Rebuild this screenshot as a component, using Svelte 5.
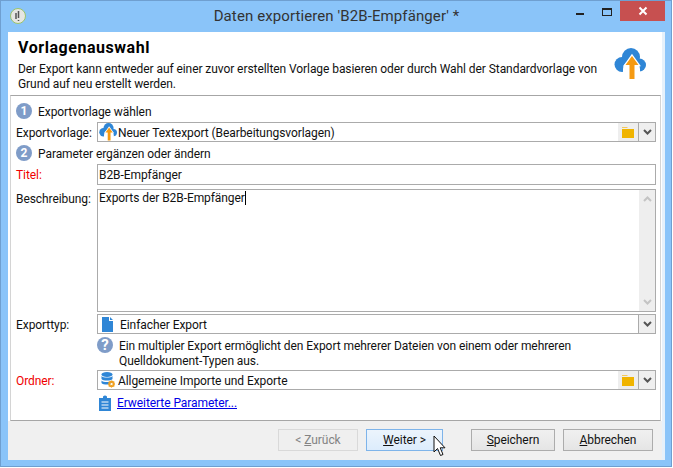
<script lang="ts">
    const buttons = [
        { pre: '< ', key: 'Z', rest: 'urück', kind: 'disabled', width: 80 },
        { pre: '', key: 'W', rest: 'eiter >', kind: 'hover', width: 77 },
        { pre: '', key: 'S', rest: 'peichern', kind: 'gap', width: 84 },
        { pre: '', key: 'A', rest: 'bbrechen', kind: '', width: 90 },
    ];
</script>

{#snippet cloud(size: number)}
    <svg width={size} height={size} viewBox="0 0 32 32">
        <circle cx="8" cy="16.5" r="7.5" fill="#2f86d6" />
        <circle cx="17" cy="9" r="9" fill="#2f86d6" />
        <circle cx="25.5" cy="17" r="6.5" fill="#2f86d6" />
        <circle cx="17.5" cy="21" r="8.5" fill="#fff" />
        <rect x="9" y="21" width="17" height="11" fill="#fff" />
        <path d="M18 8 L24.5 17 H20.5 V31 H15.5 V17 H11.5 Z" fill="#f59a12" stroke="#fff" stroke-width="2.5" paint-order="stroke" />
    </svg>
{/snippet}

{#snippet folder()}
    <span class="side-btn">
        <svg width="12" height="11" viewBox="0 0 12 11">
            <path d="M0 0 H5 L6 1 H0 Z" fill="#f5c95a" />
            <rect x="0" y="2" width="12" height="9" fill="#f0b400" />
        </svg>
    </span>
{/snippet}

{#snippet chevron(color: string)}
    <svg width="9" height="7" viewBox="0 0 9 7">
        <path d="M1 1 L4.5 4.5 L8 1" fill="none" stroke={color} stroke-width="2" />
    </svg>
{/snippet}

{#snippet chevronUp()}
    <svg width="9" height="7" viewBox="0 0 9 7">
        <path d="M1 6 L4.5 2.5 L8 6" fill="none" stroke="#c4c4c4" stroke-width="2" />
    </svg>
{/snippet}

{#snippet dropdown()}
    <span class="drop-btn">{@render chevron('#555')}</span>
{/snippet}

<div class="window">
    <header class="titlebar">
        <span class="app-icon">
            <svg width="16" height="16" viewBox="0 0 16 16">
                <circle cx="8" cy="8" r="7.5" fill="#e6e6e2" stroke="#9cc46a" />
                <path d="M8.5 3 V10 M6 5 V11 M8.5 12 V13" stroke="#555" stroke-width="1.5" fill="none" />
            </svg>
        </span>
        <h1>Daten exportieren 'B2B-Empfänger' *</h1>
        <div class="controls">
            <span class="minimize"></span>
            <span class="maximize"></span>
            <span class="close">
                <svg width="10" height="10" viewBox="0 0 10 10">
                    <path d="M1.5 1.5 L8.5 8.5 M8.5 1.5 L1.5 8.5" stroke="#fff" stroke-width="2" />
                </svg>
            </span>
        </div>
    </header>

    <div class="client">
        <section class="head">
            <div>
                <h2>Vorlagenauswahl</h2>
                <p>Der Export kann entweder auf einer zuvor erstellten Vorlage basieren oder durch Wahl der Standardvorlage von Grund auf neu erstellt werden.</p>
            </div>
            <span class="head-icon">{@render cloud(32)}</span>
        </section>

        <section class="form">
            <div class="step"><span class="badge">1</span><span class="text">Exportvorlage wählen</span></div>

            <span class="label">Exportvorlage:</span>
            <div class="field">
                <span class="field-icon cloud-icon">{@render cloud(18)}</span>
                <span class="value">Neuer Textexport (Bearbeitungsvorlagen)</span>
                {@render folder()}
                {@render dropdown()}
            </div>

            <div class="step"><span class="badge">2</span><span class="text">Parameter ergänzen oder ändern</span></div>

            <span class="label required">Titel:</span>
            <div class="field title"><span class="value plain">B2B-Empfänger</span></div>

            <span class="label desc-label">Beschreibung:</span>
            <div class="field textarea">
                <span class="value plain">Exports der B2B-Empfänger<i class="caret"></i></span>
                <span class="scrollbar">
                    {@render chevronUp()}
                    {@render chevron('#c4c4c4')}
                </span>
            </div>

            <span class="label">Exporttyp:</span>
            <div class="field">
                <span class="field-icon doc-icon">
                    <svg width="11" height="15" viewBox="0 0 11 15">
                        <path d="M0 0 H7 V4 H11 V15 H0 Z M8 0 L11 3 H8 Z" fill="#2f86d6" />
                    </svg>
                </span>
                <span class="value">Einfacher Export</span>
                {@render dropdown()}
            </div>

            <div class="info">
                <span class="badge big">?</span>
                <p>Ein multipler Export ermöglicht den Export mehrerer Dateien von einem oder mehreren Quelldokument-Typen aus.</p>
            </div>

            <span class="label required">Ordner:</span>
            <div class="field">
                <span class="field-icon">
                    <svg width="14" height="16" viewBox="0 0 14 16">
                        <ellipse cx="6" cy="2.5" rx="5.5" ry="2.5" fill="#2f86d6" />
                        <path d="M0.5 4 C2 6 10 6 11.5 4 V7 C10 9 2 9 0.5 7 Z" fill="#2f86d6" />
                        <path d="M0.5 8.5 C2 10.5 10 10.5 11.5 8.5 V11 C10 13 2 13 0.5 11 Z" fill="#2f86d6" />
                        <circle cx="10.5" cy="12" r="2.4" fill="none" stroke="#f0a020" stroke-width="1.6" />
                        <path d="M10.5 8.5 V15.5 M7 12 H14 M8 9.5 L13 14.5 M13 9.5 L8 14.5" stroke="#f0a020" stroke-width="0.9" />
                        <circle cx="10.5" cy="12" r="1" fill="#fff" />
                    </svg>
                </span>
                <span class="value">Allgemeine Importe und Exporte</span>
                {@render folder()}
                {@render dropdown()}
            </div>

            <div class="more">
                <svg width="12" height="16" viewBox="0 0 12 16">
                    <path d="M0 3 H4 V1.5 Q6 -0.5 8 1.5 V3 H12 V16 H0 Z" fill="#2f86d6" />
                    <path d="M2.5 7 H9.5 M2.5 10 H9.5 M2.5 13 H9.5" stroke="#fff" stroke-width="1" />
                </svg>
                <a href="#parameter">Erweiterte Parameter...</a>
            </div>
        </section>

        <footer class="actions">
            {#each buttons as b}
                <button class={b.kind} style="width: {b.width}px">{b.pre}<u>{b.key}</u>{b.rest}</button>
            {/each}
        </footer>
    </div>

    <svg class="cursor" width="13" height="22" viewBox="0 0 13 22">
        <path d="M1 1 V17 L4.5 13.5 L7.5 20.5 L10 19.5 L7.2 12.8 H12 Z" fill="#fff" stroke="#111" stroke-width="1" />
    </svg>
</div>

<style>
    :global(body) {
        background: #fff;
    }

    .window {
        position: relative;
        box-sizing: border-box;
        width: 672px;
        height: 467px;
        display: flex;
        flex-direction: column;
        padding: 0 6px 6px 7px;
        background: #8ac4f9;
        border: 1px solid #6f9fd0;
        font: 12px/15px Roboto, sans-serif;
        letter-spacing: -0.07px;
        color: #111;
    }

    .titlebar {
        flex: 0 0 31px;
        display: flex;
        align-items: flex-start;
        position: relative;
    }

    .app-icon {
        margin: 7px 0 0 2px;
    }

    h1 {
        position: absolute;
        left: 0;
        right: 0;
        top: 5px;
        margin: 0;
        text-align: center;
        font-size: 15px;
        line-height: 20px;
        font-weight: 400;
        letter-spacing: 0.1px;
        color: #333;
    }

    .controls {
        margin-left: auto;
        display: flex;
        align-items: flex-start;
    }

    .minimize {
        width: 8px;
        height: 2px;
        margin: 12px 18px 0 0;
        background: #222;
    }

    .maximize {
        box-sizing: border-box;
        width: 10px;
        height: 8px;
        margin: 7px 8px 0 0;
        border: 1px solid #222;
        border-top-width: 2px;
    }

    .close {
        width: 45px;
        height: 20px;
        display: flex;
        align-items: center;
        justify-content: center;
        background: #c75050;
    }

    .client {
        flex: 1;
        display: flex;
        flex-direction: column;
        background: #fff;
        border-right: 3px solid #e6f1fb;
    }

    .head {
        flex: 0 0 63px;
        display: flex;
        justify-content: space-between;
        padding-left: 10px;
    }

    h2 {
        margin: 7px 0 5px;
        font-size: 16px;
        line-height: 18px;
        font-weight: 700;
        letter-spacing: 0.55px;
        color: #000;
    }

    .head p {
        width: 592px;
        margin: 0;
    }

    .head-icon {
        margin: 16px 16px 0 0;
    }

    .form {
        box-sizing: border-box;
        flex: 0 0 326px;
        margin: 0 1px 0 2px;
        padding: 7px 4px 0 5px;
        display: grid;
        grid-template-columns: 81px 1fr;
        grid-template-rows: 16px 20px 16px 21px 123px 20px 30px 20px 16px;
        row-gap: 3px;
        border: 1px solid #d4d4d4;
        border-top-color: #a6a6a6;
        border-bottom-color: #a6a6a6;
    }

    .step {
        grid-column: 1 / -1;
        display: flex;
        align-items: center;
        gap: 6px;
    }

    .text {
        padding-top: 2px;
    }

    .badge {
        width: 16px;
        height: 16px;
        display: flex;
        align-items: center;
        justify-content: center;
        border-radius: 50%;
        background: #7f9cc8;
        color: #fff;
        font-size: 12px;
        font-weight: 700;
    }

    .badge.big {
        font-size: 15px;
    }

    .label {
        align-self: center;
        padding-top: 2px;
    }

    .required {
        color: #f00000;
    }

    .desc-label {
        align-self: start;
        margin-top: 3px;
        padding-top: 1px;
    }

    .field {
        display: flex;
        align-items: center;
        min-width: 0;
        box-sizing: border-box;
        border: 1px solid #ababab;
        background: #fff;
    }

    .field-icon {
        display: flex;
        margin-left: 3px;
    }

    .cloud-icon {
        margin-left: 1px;
    }

    .doc-icon {
        margin-left: 4px;
    }

    .value {
        flex: 1;
        margin-left: 3px;
        padding-top: 2px;
        white-space: nowrap;
    }

    .cloud-icon + .value {
        margin-left: 1px;
    }

    .doc-icon + .value {
        margin-left: 7px;
    }

    .plain {
        margin-left: 1px;
    }

    .side-btn {
        align-self: stretch;
        width: 20px;
        display: flex;
        align-items: center;
        justify-content: center;
        background: #eeeeee;
    }

    .drop-btn {
        align-self: stretch;
        width: 16px;
        display: flex;
        align-items: center;
        justify-content: center;
        background: #efefef;
        border-left: 1px solid #ababab;
    }

    .textarea {
        align-items: stretch;
        margin-top: 1px;
        height: 123px;
    }

    .textarea .value {
        padding-top: 1px;
    }

    .caret {
        display: inline-block;
        width: 1px;
        height: 14px;
        vertical-align: -3px;
        background: #000;
    }

    .scrollbar {
        width: 16px;
        display: flex;
        flex-direction: column;
        align-items: center;
        justify-content: space-between;
        padding: 5px 0;
        background: #eeeeee;
    }

    .info {
        grid-column: 2;
        display: flex;
        gap: 6px;
    }

    .info p {
        margin: 0;
        width: 520px;
        padding-top: 2px;
    }

    .more {
        grid-column: 2;
        display: flex;
        align-items: center;
        gap: 6px;
        margin: 3px 0 0 2px;
    }

    a {
        padding-top: 2px;
        color: #0000e6;
    }

    .actions {
        flex: 1;
        display: flex;
        align-items: flex-start;
        justify-content: flex-end;
        gap: 8px;
        padding: 8px 9px 0 0;
        background: #f0f0f0;
    }

    button {
        box-sizing: border-box;
        height: 22px;
        padding: 1px 0 0;
        border: 1px solid #acacac;
        background: linear-gradient(#f0f0f0, #e5e5e5);
        font: inherit;
        letter-spacing: inherit;
        color: #111;
    }

    button.gap {
        margin-left: 20px;
    }

    button.disabled {
        border-color: #d9d9d9;
        background: #efefef;
        color: #838383;
    }

    button.hover {
        border-color: #7eb4ea;
        background: linear-gradient(#ecf4fc, #dcecfc);
    }

    .cursor {
        position: absolute;
        left: 432px;
        top: 434px;
    }
</style>
